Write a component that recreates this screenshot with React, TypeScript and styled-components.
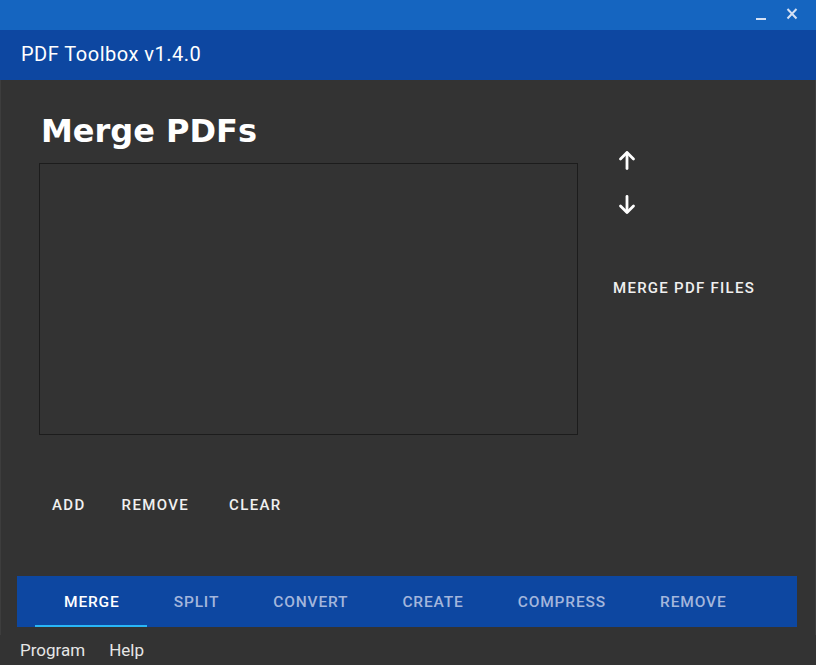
import React from "react";
import styled, { createGlobalStyle } from "styled-components";

const Global = createGlobalStyle`
  html, body { margin: 0; padding: 0; background: #333333; }
  body { font-family: Roboto, "Noto Sans", sans-serif; }
  * { box-sizing: border-box; }
`;

const Window = styled.div`
  width: 816px;
  height: 665px;
  display: flex;
  flex-direction: column;
  background: #333333;
  overflow: hidden;
`;

const TitleBar = styled.div`
  height: 30px;
  background: #1565c0;
  display: flex;
  justify-content: flex-end;
  align-items: center;
  padding-right: 18px;
  gap: 19px;
`;

const WinButton = styled.span`
  display: flex;
  width: 12px;
  height: 14px;
  align-items: center;
  justify-content: center;
  margin-top: -2px;
`;

const Header = styled.div`
  height: 50px;
  background: #0d47a1;
  display: flex;
  align-items: center;
  padding-left: 21px;
  color: #ffffff;
  font-size: 20px;
  letter-spacing: 0.5px;
  padding-bottom: 2px;
`;

const Body = styled.div`
  flex: 1;
  display: flex;
  flex-direction: column;
  border-left: 1px solid #3d3d3d;
  border-right: 1px solid #3d3d3d;
  padding: 0 17px 8px 16px;
`;

const Content = styled.div`
  flex: 1;
  display: flex;
  padding-left: 22px;
`;

const LeftCol = styled.div`
  width: 539px;
  display: flex;
  flex-direction: column;
`;

const Heading = styled.h1`
  margin: 30px 0 0 2px;
  font-family: "DejaVu Sans", Verdana, sans-serif;
  font-weight: bold;
  font-size: 32px;
  line-height: 43px;
  color: #ffffff;
  height: 53px;
`;

const FileList = styled.div`
  height: 272px;
  border: 1px solid #1c1c1c;
  background: #333333;
`;

const ButtonRow = styled.div`
  display: flex;
  margin-top: 53px;
  margin-left: 1px;
`;

const TextButton = styled.button<{ $ml: number }>`
  background: none;
  border: none;
  color: #f0f0f0;
  font-family: Roboto, sans-serif;
  font-weight: 500;
  font-size: 15px;
  letter-spacing: 0.09em;
  padding: 8px 0;
  margin-left: ${(p) => p.$ml}px;
  cursor: pointer;
`;

const RightCol = styled.div`
  display: flex;
  flex-direction: column;
  padding-left: 35px;
  padding-top: 66px;
`;

const IconButton = styled.div`
  width: 28px;
  height: 28px;
  display: flex;
  align-items: center;
  justify-content: center;
  margin-bottom: 17px;
`;

const MergeButton = styled(TextButton)`
  margin-top: 35px;
  text-align: left;
  letter-spacing: 0.085em;
`;

const TabBar = styled.div`
  height: 51px;
  background: #0d47a1;
  display: flex;
  padding-left: 20px;
  margin-right: 1px;
`;

const Tab = styled.div<{ $active?: boolean }>`
  position: relative;
  display: flex;
  align-items: center;
  padding: 1px 27px 0;
  font-family: Roboto, sans-serif;
  font-weight: 500;
  font-size: 15.5px;
  letter-spacing: 0.055em;
  color: ${(p) => (p.$active ? "#ffffff" : "#a3b6dc")};
  &::after {
    content: "";
    display: ${(p) => (p.$active ? "block" : "none")};
    position: absolute;
    left: -2px;
    right: 0;
    bottom: 0;
    height: 2px;
    background: #29b6f6;
  }
`;

const MenuBar = styled.div`
  height: 30px;
  display: flex;
  align-items: center;
  padding-left: 20px;
  gap: 24px;
  color: #e6e6e6;
  font-size: 17px;
`;

const UpArrow = () => (
  <svg width="18" height="20" viewBox="0 0 18 20">
    <path d="M9 18.5V3" stroke="#fff" strokeWidth="2.8" fill="none" strokeLinecap="round" />
    <path d="M2.5 9L9 2.5L15.5 9" stroke="#fff" strokeWidth="2.8" fill="none" strokeLinecap="round" strokeLinejoin="round" />
  </svg>
);

const DownArrow = () => (
  <svg width="18" height="20" viewBox="0 0 18 20">
    <path d="M9 1.5V17" stroke="#fff" strokeWidth="2.8" fill="none" strokeLinecap="round" />
    <path d="M2.5 11L9 17.5L15.5 11" stroke="#fff" strokeWidth="2.8" fill="none" strokeLinecap="round" strokeLinejoin="round" />
  </svg>
);

const MinimizeIcon = () => (
  <svg width="12" height="14" viewBox="0 0 12 14">
    <rect x="1" y="11" width="10" height="2" fill="#d5e1f4" />
  </svg>
);

const CloseIcon = () => (
  <svg width="12" height="14" viewBox="0 0 12 14">
    <path d="M1.5 2L10.5 11.5M10.5 2L1.5 11.5" stroke="#d5e1f4" strokeWidth="2" />
  </svg>
);

const tabs = ["MERGE", "SPLIT", "CONVERT", "CREATE", "COMPRESS", "REMOVE"];

export default function App() {
  return (
    <Window>
      <Global />
      <TitleBar>
        <WinButton><MinimizeIcon /></WinButton>
        <WinButton><CloseIcon /></WinButton>
      </TitleBar>
      <Header>PDF Toolbox v1.4.0</Header>
      <Body>
        <Content>
          <LeftCol>
            <Heading>Merge PDFs</Heading>
            <FileList />
            <ButtonRow>
              <TextButton $ml={12}>ADD</TextButton>
              <TextButton $ml={36}>REMOVE</TextButton>
              <TextButton $ml={40}>CLEAR</TextButton>
            </ButtonRow>
          </LeftCol>
          <RightCol>
            <IconButton><UpArrow /></IconButton>
            <IconButton><DownArrow /></IconButton>
            <MergeButton $ml={0}>MERGE PDF FILES</MergeButton>
          </RightCol>
        </Content>
        <TabBar>
          {tabs.map((t, i) => (
            <Tab key={t} $active={i === 0}>{t}</Tab>
          ))}
        </TabBar>
      </Body>
      <MenuBar>
        <span>Program</span>
        <span>Help</span>
      </MenuBar>
    </Window>
  );
}
